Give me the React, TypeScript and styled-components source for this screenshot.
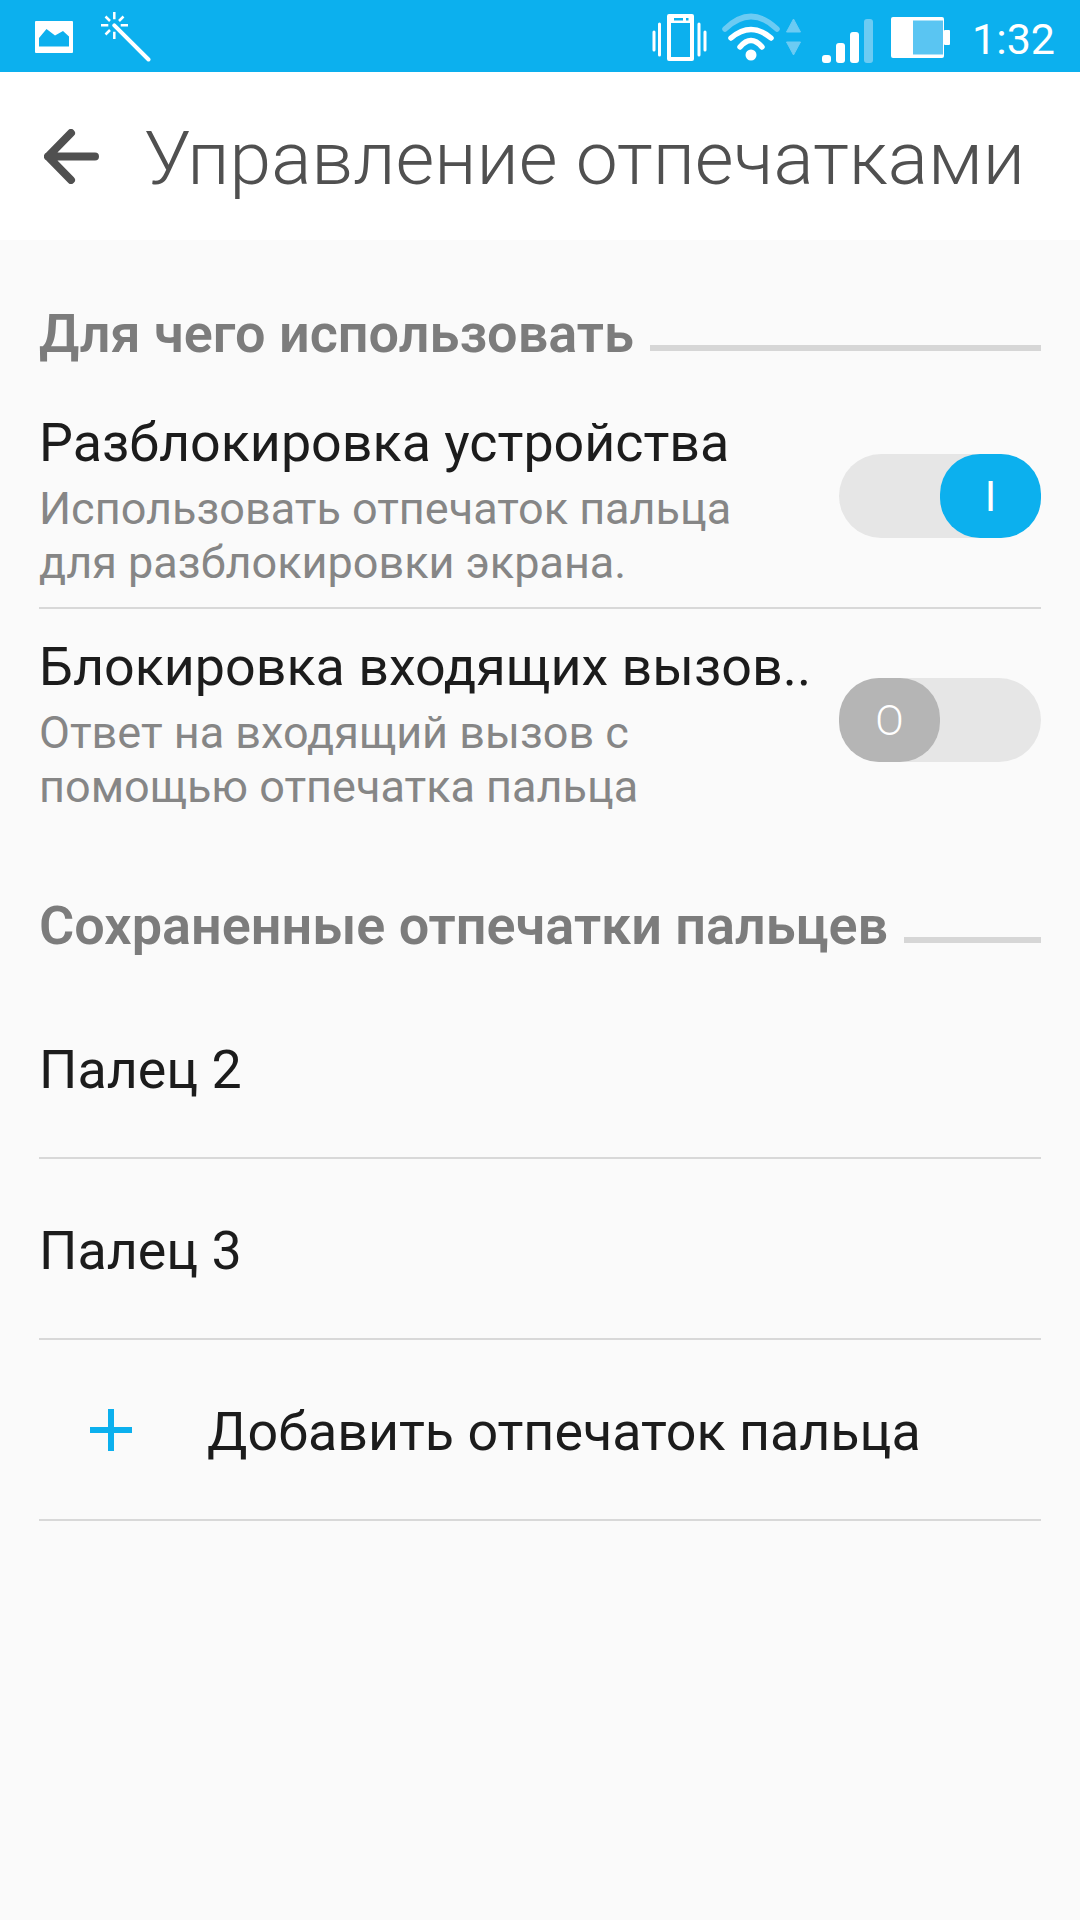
import React from "react";
import styled, { createGlobalStyle } from "styled-components";

const Global = createGlobalStyle`
  html, body { margin: 0; padding: 0; background: #fafafa; }
  body { font-family: Roboto, "Noto Sans", sans-serif; }
`;
const Page = styled.div`
  width: 1080px; height: 1920px; display: flex; flex-direction: column; background: #fafafa; overflow: hidden;
`;
const StatusBar = styled.div`
  height: 72px; flex: none; background: #0cb0ee; display: flex; align-items: flex-start;
  padding: 0 25px 0 35px; box-sizing: border-box;
`;
const StatusIcon = styled.svg<{ $gap: number; $top: number }>`
  flex: none; margin-left: ${p => p.$gap}px; margin-top: ${p => p.$top}px;
`;
const Spacer = styled.div`flex: 1;`;
const Clock = styled.span`
  font-size: 43px; color: #fff; margin-left: 22px; line-height: 78px;
`;
const Header = styled.header`
  height: 168px; flex: none; background: #fff; display: flex; align-items: center; padding-left: 44px; box-sizing: border-box;
`;
const Title = styled.h1`
  margin: 5px 0 0 45px; font-size: 75px; font-weight: 300; color: #505050; line-height: 1; white-space: nowrap;
`;
const Body = styled.main`padding: 0 39px; display: flex; flex-direction: column;`;
const SectionHead = styled.div<{ $top: number; $bottom: number }>`
  display: flex; align-items: center; gap: 16px; margin: ${p => p.$top}px 0 ${p => p.$bottom}px; height: 72px;
`;
const SectionLabel = styled.span`
  font-size: 54px; font-weight: 600; color: #7c7c7c; white-space: nowrap; flex: none;
`;
const SectionRule = styled.span`flex: 1; height: 6px; background: #d6d6d6; margin-top: 30px;`;
const ToggleRow = styled.div<{ $line?: boolean }>`
  display: flex; justify-content: space-between; align-items: center; height: 224px; box-sizing: border-box;
  border-bottom: 2px solid ${p => p.$line ? "#d8d8d8" : "transparent"};
`;
const RowText = styled.div`display: flex; flex-direction: column; width: 780px; padding-top: 11px;`;
const RowTitle = styled.div`font-size: 53.8px; color: #1c1c1c; line-height: 60px; margin-bottom: 9px; white-space: nowrap;`;
const RowSub = styled.div`font-size: 45px; color: #868686; line-height: 54px; white-space: nowrap;`;
const Track = styled.div<{ $on: boolean }>`
  width: 202px; height: 84px; border-radius: 42px; background: #e6e6e6; display: flex; flex: none;
  justify-content: ${p => p.$on ? "flex-end" : "flex-start"};
`;
const Knob = styled.div<{ $on: boolean }>`
  width: 101px; height: 84px; border-radius: 40px; display: flex; align-items: center; justify-content: center;
  background: ${p => p.$on ? "#0cb0ee" : "#b5b5b5"}; color: #fff; font-size: 42px;
  font-weight: ${p => p.$on ? 400 : 300};
`;
const ListRow = styled.div`
  height: 181px; box-sizing: border-box; border-bottom: 2px solid #d8d8d8; display: flex; align-items: center;
`;
const ListLabel = styled.span`font-size: 53.8px; color: #1c1c1c; margin-top: 4px;`;
const AddIcon = styled.svg`width: 42px; height: 42px; margin-left: 51px; margin-right: 75px; flex: none;`;

const LIGHT = "#6ccbf3";

export default function App() {
  return (
    <Page>
      <Global />
      <StatusBar>
        <StatusIcon $gap={0} $top={21} width="38" height="32" viewBox="0 0 38 32">
          <path fillRule="evenodd" fill="#fff" d="M1 0h36a1 1 0 0 1 1 1v30a1 1 0 0 1-1 1H1a1 1 0 0 1-1-1V1a1 1 0 0 1 1-1zM4 25.500h30V15.500L28 10l-8 4.500L11.500 8 4 17z" />
        </StatusIcon>
        <StatusIcon $gap={28} $top={12} width="50" height="50" viewBox="0 0 50 50">
          <g stroke="#fff" strokeWidth="2.500" strokeLinecap="butt">
            <path d="M13.300 0v7.300M13.300 19.700V27M0 13.300h7.300M19.700 13.300H27M4.500 4.500l4.500 4.500M22.500 4.500l-4.500 4.500M4.500 22.500l4.500-4.500" />
            <path d="M13.300 13.300L47.500 47.500" strokeWidth="4" strokeLinecap="round" />
          </g>
        </StatusIcon>
        <Spacer />
        <StatusIcon $gap={0} $top={14} width="55" height="47" viewBox="0 0 55 47">
          <path fillRule="evenodd" fill="#fff" d="M17 0h23a2 2 0 0 1 2 2v43a2 2 0 0 1-2 2H17a2 2 0 0 1-2-2V2a2 2 0 0 1 2-2zM19 9v34h19V9zM22 4v2.500h9V4zM34 4v2.500h2.500V4z" />
          <path d="M2 18v18M7.500 10v31M47 10v31M53 18v18" stroke="#fff" strokeWidth="3" strokeLinecap="round" fill="none" />
        </StatusIcon>
        <StatusIcon $gap={15} $top={13} width="58" height="48" viewBox="0 0 58 48">
          <g fill="none" strokeLinecap="round" strokeWidth="5.500">
            <path d="M3 16Q29-9 55 16" stroke={LIGHT} />
            <path d="M9 25Q29 8 49 25" stroke="#fff" />
            <path d="M18 34Q29 21 40 34" stroke="#fff" />
          </g>
          <circle cx="29" cy="42" r="5.500" fill="#fff" />
        </StatusIcon>
        <StatusIcon $gap={6} $top={18} width="15" height="38" viewBox="0 0 15 38">
          <path d="M7.500 1L14.500 14H.5zM.5 24h14L7.500 37z" fill={LIGHT} stroke={LIGHT} strokeLinejoin="round" />
        </StatusIcon>
        <StatusIcon $gap={21} $top={19} width="51" height="44" viewBox="0 0 51 44">
          <rect x="0" y="36" width="9" height="8" rx="3" fill="#fff" />
          <rect x="14" y="24" width="9" height="20" rx="3" fill="#fff" />
          <rect x="28" y="13" width="9" height="31" rx="3" fill="#fff" />
          <rect x="42" y="0" width="9" height="44" rx="3" fill={LIGHT} />
        </StatusIcon>
        <StatusIcon $gap={18} $top={17} width="59" height="41" viewBox="0 0 59 41">
          <rect x="0" y="0" width="53" height="41" rx="2" fill="#fff" />
          <rect x="22" y="3.500" width="30" height="34" fill="#5ac5f2" />
          <rect x="53" y="13" width="6" height="15" rx="1" fill="#fff" />
        </StatusIcon>
        <Clock>1:32</Clock>
      </StatusBar>
      <Header>
        <svg width="55" height="55" viewBox="0 0 55 55">
          <path d="M27 4L4 27.500l23 23.500M4 27.500h47" fill="none" stroke="#505050" strokeWidth="8" strokeLinecap="round" strokeLinejoin="round" />
        </svg>
        <Title>Управление отпечатками</Title>
      </Header>
      <Body>
        <SectionHead $top={57} $bottom={16}>
          <SectionLabel>Для чего использовать</SectionLabel>
          <SectionRule />
        </SectionHead>
        <ToggleRow $line>
          <RowText>
            <RowTitle>Разблокировка устройства</RowTitle>
            <RowSub>Использовать отпечаток пальца<br />для разблокировки экрана.</RowSub>
          </RowText>
          <Track $on><Knob $on>I</Knob></Track>
        </ToggleRow>
        <ToggleRow>
          <RowText>
            <RowTitle>Блокировка входящих вызов..</RowTitle>
            <RowSub>Ответ на входящий вызов с<br />помощью отпечатка пальца</RowSub>
          </RowText>
          <Track $on={false}><Knob $on={false}>O</Knob></Track>
        </ToggleRow>
        <SectionHead $top={56} $bottom={17}>
          <SectionLabel>Сохраненные отпечатки пальцев</SectionLabel>
          <SectionRule />
        </SectionHead>
        <ListRow><ListLabel>Палец 2</ListLabel></ListRow>
        <ListRow><ListLabel>Палец 3</ListLabel></ListRow>
        <ListRow>
          <AddIcon viewBox="0 0 42 42"><path d="M21 0v42M0 21h42" stroke="#0cb0ee" strokeWidth="6" /></AddIcon>
          <ListLabel>Добавить отпечаток пальца</ListLabel>
        </ListRow>
      </Body>
    </Page>
  );
}
